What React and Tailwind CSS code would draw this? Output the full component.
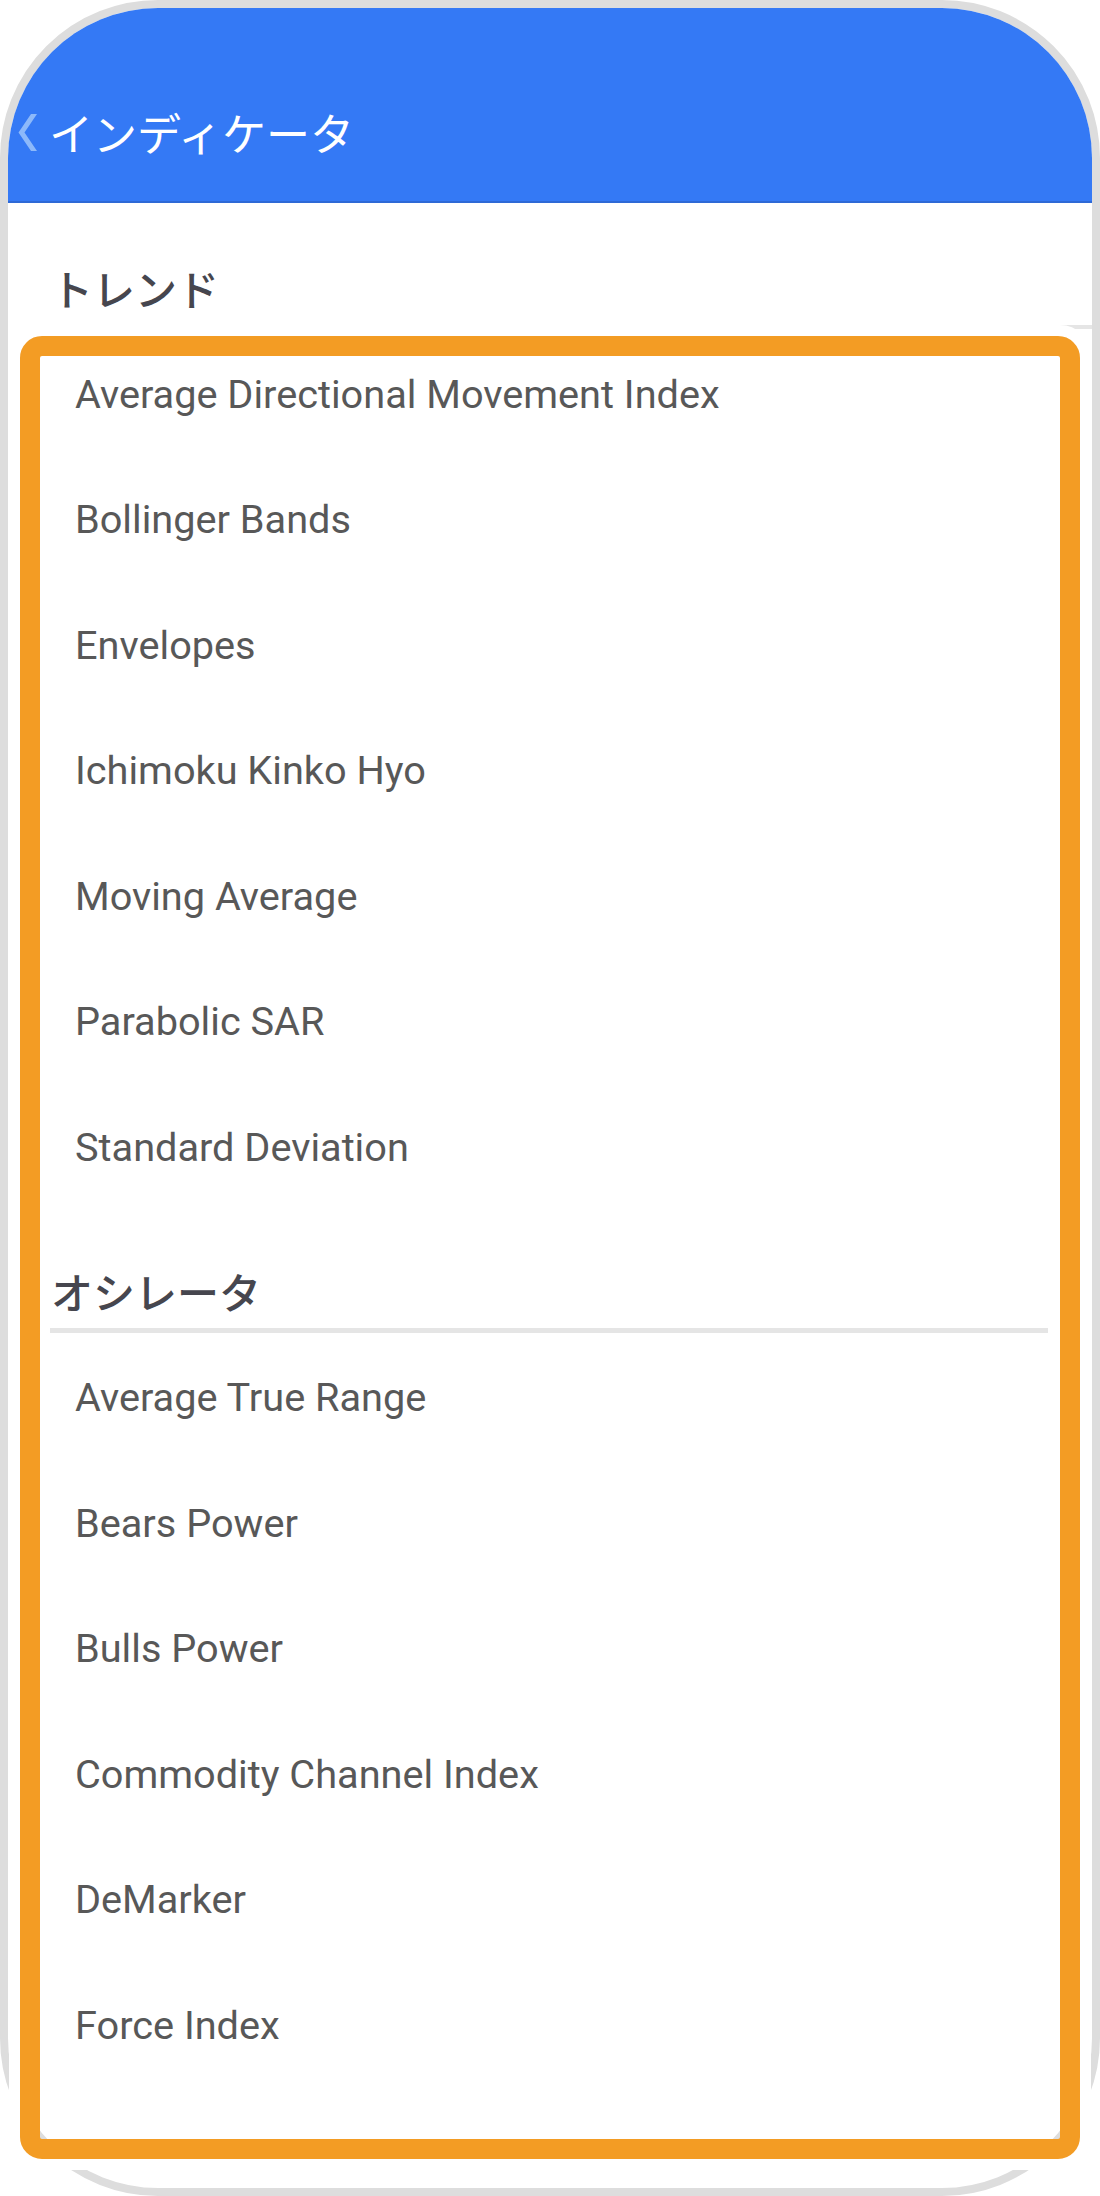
const trend = [
  "Average Directional Movement Index",
  "Bollinger Bands",
  "Envelopes",
  "Ichimoku Kinko Hyo",
  "Moving Average",
  "Parabolic SAR",
  "Standard Deviation",
];
const osc = [
  "Average True Range",
  "Bears Power",
  "Bulls Power",
  "Commodity Channel Index",
  "DeMarker",
  "Force Index",
];

function Row({ label }) {
  return (
    <li className="flex h-[125.5px] items-center pl-[67px] font-['Roboto',sans-serif] text-[39.7px] leading-[46px] text-[#585858]">
      {label}
    </li>
  );
}

export default function App() {
  return (
    <div className="w-[1100px] h-[2196px] bg-white">
      <div className="relative w-[1100px] h-[2196px] border-[8px] border-[#dddddd] rounded-[158px] bg-white">
        <header className="h-[195px] rounded-t-[150px] bg-[#3479f5] border-b-2 border-[#2e69d6] pt-[99px] pl-[10px]">
          <div className="flex h-[50px] items-center">
            <svg width="19" height="37" viewBox="0 0 19 37" className="shrink-0">
              <polygon points="13,0 19,0 6.5,18.5 19,37 13,37 0.5,18.5" fill="#8db9fa" />
            </svg>
            <span className="ml-[12px] font-['Noto_Sans_CJK_JP',sans-serif] text-[44px] leading-[44px] text-white">
              インディケータ
            </span>
          </div>
        </header>

        <section>
          <h2 className="mt-[60px] ml-[43px] h-[50px] font-['Noto_Sans_CJK_JP',sans-serif] text-[42px] leading-[50px] font-medium text-[#46464e]">
            トレンド
          </h2>
          <div className="mt-[12px] ml-[42px] w-[1042px] h-[4px] bg-[#e5e5e5]" />
          <ul className="mt-[3px]">
            {trend.map((t) => (
              <Row key={t} label={t} />
            ))}
          </ul>
        </section>

        <section>
          <h2 className="mt-[55px] ml-[43px] h-[50px] font-['Noto_Sans_CJK_JP',sans-serif] text-[42px] leading-[50px] font-medium text-[#46464e]">
            オシレータ
          </h2>
          <div className="mt-[12px] ml-[42px] w-[998px] h-[5px] bg-[#e5e5e5]" />
          <ul className="mt-[3px]">
            {osc.map((t) => (
              <Row key={t} label={t} />
            ))}
          </ul>
        </section>

        <div className="pointer-events-none absolute left-[1px] top-[317px] w-[1082px] h-[1845px] rounded-[31px] border-[11px] border-white">
          <div className="h-full w-full rounded-[22px] border-[20px] border-[#f39c24]" />
        </div>
      </div>
    </div>
  );
}
